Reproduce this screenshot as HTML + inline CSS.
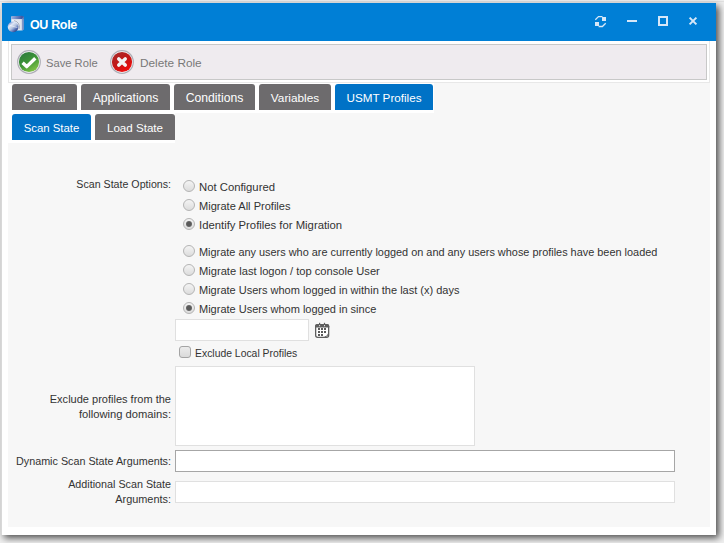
<!DOCTYPE html>
<html><head><meta charset="utf-8">
<style>
*{margin:0;padding:0;box-sizing:border-box}
html,body{width:724px;height:543px;overflow:hidden}
body{background:#f0f0f0;position:relative;font-family:"Liberation Sans",sans-serif;color:#333}
.a{position:absolute}
#win{left:1px;top:3px;width:715px;height:532px;background:#fff;box-shadow:3px 3px 7px rgba(0,0,0,.68);border-left:1px solid #d8d8d8}
#title{left:2px;top:3px;width:714px;height:38px;background:#007fd6}
#ttl{left:30px;top:17.5px;font-weight:bold;font-size:12.5px;letter-spacing:-0.35px;color:#fff;line-height:14px;white-space:nowrap}
#outer{left:8px;top:41px;width:702px;height:42px;border:1px solid #e8e8e8;border-top:none;background:#fff}
#tb{left:11px;top:44px;width:696px;height:36px;border:1px solid #c8c8c8;background:#efebef}
.tbt{font-size:11.3px;color:#787878;line-height:14px;white-space:nowrap}
.tab{height:26px;border-radius:3px 3px 0 0;background:#6d6b6d;color:#fff;font-size:11.4px;line-height:28px;text-align:center;white-space:nowrap}
.tab.on{background:#0072c6}
#panel{left:8px;top:83px;width:702px;height:444px;background:#f7f7f7}
#sub{left:8px;top:113px;width:167px;height:30px;background:#fff}
#sub1{left:8px;top:83px;width:426px;height:30px;background:#fff}
.lbl{font-size:10.9px;line-height:15px;text-align:right;white-space:nowrap;color:#333}
.opt{font-size:10.9px;line-height:14px;white-space:nowrap;color:#333}
.rad{width:12px;height:12px;border-radius:50%;border:1px solid #b4b4b4;background:linear-gradient(#f4f4f4,#dcdcdc)}
.rad.on::after{content:"";position:absolute;left:2px;top:2px;width:6px;height:6px;border-radius:50%;background:radial-gradient(#5a5a5a 45%,#808080 100%)}
.inp{background:#fff;border:1px solid #e0e0e0}
</style></head><body>
<div class="a" style="left:0;top:1px;width:724px;height:1px;background:#e2e2e2"></div>
<div id="win" class="a"></div>
<div id="title" class="a"></div>
<!-- app icon -->
<svg class="a" style="left:5px;top:13px" width="22" height="22" viewBox="0 0 22 22">
  <defs>
    <linearGradient id="bx" x1="0" y1="0" x2="1" y2="0"><stop offset="0" stop-color="#f2f4f8"/><stop offset=".75" stop-color="#dfe4ee"/><stop offset="1" stop-color="#a9b8d6"/></linearGradient>
    <linearGradient id="bt" x1="0" y1="0" x2="1" y2="0"><stop offset="0" stop-color="#9eb2e0"/><stop offset="1" stop-color="#2f4a98"/></linearGradient>
    <linearGradient id="cd" x1="0.1" y1="0.1" x2="0.8" y2="0.95"><stop offset="0" stop-color="#6f90d4"/><stop offset=".3" stop-color="#dfe7f6"/><stop offset=".55" stop-color="#b4c2de"/><stop offset=".78" stop-color="#5c76b8"/><stop offset="1" stop-color="#24377a"/></linearGradient>
  </defs>
  <path d="M6.2 3.8 L17 3 L18.6 3.8 V16.6 L17.4 17.4 H6.2 Z" fill="url(#bx)"/>
  <path d="M6.2 3.3 L16.6 2.8 L18.7 3.5 V6 L6.2 6.3 Z" fill="url(#bt)"/>
  <path d="M18.6 4 V16.6 L17.2 17.3 V5 Z" fill="#7188c0"/>
  <path d="M9 7.6 A6.4 6.4 0 0 1 14.2 15.8" fill="none" stroke="#5a6480" stroke-width=".8" opacity=".55"/>
  <circle cx="8.1" cy="13.8" r="5.4" fill="url(#cd)"/>
  <path d="M4.2 12.2 L12.4 14.6" stroke="#ffffff" stroke-width="1" opacity=".5"/>
</svg>
<div id="ttl" class="a">OU Role</div>
<!-- window controls -->
<svg class="a" style="left:590px;top:12px" width="115" height="20" viewBox="0 0 115 20">
  <g fill="#d6e7f8">
    <rect x="12" y="5" width="4" height="4"/>
    <rect x="5" y="10" width="4" height="4"/>
    <rect x="37" y="8" width="10" height="2"/>
  </g>
  <g fill="none" stroke="#d6e7f8">
    <path d="M5.3 7.7 L8.5 4.6 H12.5 M8.6 14.5 H12.4 L15.7 11.2" stroke-width="1.3"/>
    <rect x="69" y="5" width="8" height="8" stroke-width="2"/>
    <path d="M99.6 5.6 L106.4 12.4 M106.4 5.6 L99.6 12.4" stroke-width="2"/>
  </g>
</svg>
<div id="outer" class="a"></div>
<div id="tb" class="a"></div>
<!-- save icon -->
<svg class="a" style="left:17px;top:50px" width="24" height="24" viewBox="0 0 24 24">
  <defs>
    <linearGradient id="gs" x1="0.2" y1="0" x2="0.8" y2="1"><stop offset="0" stop-color="#2d7a3e"/><stop offset=".5" stop-color="#3f9638"/><stop offset="1" stop-color="#8cc84a"/></linearGradient>
    <linearGradient id="rs" x1="0.2" y1="0" x2="0.8" y2="1"><stop offset="0" stop-color="#a82a2a"/><stop offset=".5" stop-color="#c41616"/><stop offset="1" stop-color="#f80c0c"/></linearGradient>
  </defs>
  <circle cx="12" cy="12" r="11.3" fill="#f8f8fa" stroke="#aeaeb6" stroke-width="1.2"/>
  <circle cx="12" cy="12" r="10.1" fill="url(#gs)"/>
  <path d="M5.6 12.8 L9.7 16.6 L18.3 8.2" fill="none" stroke="#fff" stroke-width="3.4" stroke-linejoin="round"/>
</svg>
<div class="a tbt" style="left:46px;top:56px;font-size:11.2px">Save Role</div>
<svg class="a" style="left:110px;top:50px" width="24" height="24" viewBox="0 0 24 24">
  <circle cx="12" cy="12" r="11.3" fill="#f8f8fa" stroke="#aeaeb6" stroke-width="1.2"/>
  <circle cx="12" cy="12" r="10.1" fill="url(#rs)"/>
  <path d="M8.8 9 L15.2 15 M15.2 9 L8.8 15" fill="none" stroke="#f4f4f4" stroke-width="3.6" stroke-linecap="round"/>
</svg>
<div class="a tbt" style="left:140px;top:56px;font-size:11.8px">Delete Role</div>

<div id="panel" class="a"></div>
<div id="sub1" class="a"></div>
<!-- tabs row 1 -->
<div class="a tab" style="left:12px;top:84px;width:65px;font-size:11.8px">General</div>
<div class="a tab" style="left:81px;top:84px;width:89px;font-size:12.2px">Applications</div>
<div class="a tab" style="left:174px;top:84px;width:81px;font-size:12.2px">Conditions</div>
<div class="a tab" style="left:259px;top:84px;width:72px;font-size:11.8px">Variables</div>
<div class="a tab on" style="left:335px;top:84px;width:98px;font-size:11.7px">USMT Profiles</div>

<div id="sub" class="a"></div>
<div class="a tab on" style="left:12px;top:114px;width:79px;font-size:11.4px">Scan State</div>
<div class="a tab" style="left:95px;top:114px;width:80px;font-size:11.6px">Load State</div>

<!-- form -->
<div class="a lbl" style="right:553px;top:177px;font-size:10.65px">Scan State Options:</div>

<div class="a rad" style="left:183px;top:180px"></div>
<div class="a opt" style="left:199px;top:180px;font-size:11.3px">Not Configured</div>
<div class="a rad" style="left:183px;top:199px"></div>
<div class="a opt" style="left:199px;top:199px;font-size:11.05px">Migrate All Profiles</div>
<div class="a rad on" style="left:183px;top:218px"></div>
<div class="a opt" style="left:199px;top:218px;font-size:11.3px">Identify Profiles for Migration</div>

<div class="a rad" style="left:183px;top:245px"></div>
<div class="a opt" style="left:199px;top:245px;font-size:10.92px">Migrate any users who are currently logged on and any users whose profiles have been loaded</div>
<div class="a rad" style="left:183px;top:264px"></div>
<div class="a opt" style="left:199px;top:264px;font-size:11.15px">Migrate last logon / top console User</div>
<div class="a rad" style="left:183px;top:283px"></div>
<div class="a opt" style="left:199px;top:283px;font-size:11px">Migrate Users whom logged in within the last (x) days</div>
<div class="a rad on" style="left:183px;top:302px"></div>
<div class="a opt" style="left:199px;top:302px;font-size:11px">Migrate Users whom logged in since</div>

<div class="a inp" style="left:175px;top:319px;width:134px;height:22px"></div>
<!-- calendar -->
<svg class="a" style="left:315px;top:322px" width="15" height="17" viewBox="0 0 15 17">
  <rect x="0.65" y="2.65" width="13" height="12.7" rx="2" fill="#fff" stroke="#5e5e5e" stroke-width="1.3"/>
  <path d="M0 4.2 Q0 2 2.2 2 H12.1 Q14.3 2 14.3 4.2 V5.4 H0 Z" fill="#5e5e5e"/>
  <path d="M9.6 14.9 Q12.9 14.6 13.3 11.6" fill="none" stroke="#6a6a6a" stroke-width="1"/>
  <g fill="#5e5e5e"><rect x="4" y="0.8" width="1.2" height="3"/><rect x="8.9" y="0.8" width="1.2" height="3"/></g>
  <g fill="#fff"><rect x="4.1" y="3.2" width="1" height="1"/><rect x="9" y="3.2" width="1" height="1"/></g>
  <g fill="#5a5a5a"><rect x="3" y="6" width="2" height="2"/><rect x="6" y="6" width="2" height="2"/><rect x="9" y="6" width="2" height="2"/>
  <rect x="3" y="9" width="2" height="2"/><rect x="6" y="9" width="2" height="2"/><rect x="9" y="9" width="2" height="2"/>
  <rect x="3" y="12" width="2" height="2"/><rect x="6" y="12" width="2" height="2"/></g>
</svg>
<div class="a" style="left:179px;top:346px;width:12px;height:12px;border:1px solid #a4a4a4;border-radius:3px;background:linear-gradient(#ececec,#dadada)"></div>
<div class="a opt" style="left:195px;top:347px;font-size:10.4px">Exclude Local Profiles</div>

<div class="a inp" style="left:175px;top:366px;width:300px;height:80px"></div>
<div class="a lbl" style="right:553px;top:392px;font-size:11.03px">Exclude profiles from the</div>
<div class="a lbl" style="right:553px;top:407px;font-size:11.2px">following domains:</div>

<div class="a inp" style="left:175px;top:450px;width:500px;height:22px;border-color:#a6a6a6"></div>
<div class="a lbl" style="right:553px;top:454px;font-size:10.78px">Dynamic Scan State Arguments:</div>

<div class="a inp" style="left:175px;top:481px;width:500px;height:22px"></div>
<div class="a lbl" style="right:553px;top:477px;font-size:10.75px">Additional Scan State</div>
<div class="a lbl" style="right:553px;top:492px;font-size:10.92px">Arguments:</div>
</body></html>
